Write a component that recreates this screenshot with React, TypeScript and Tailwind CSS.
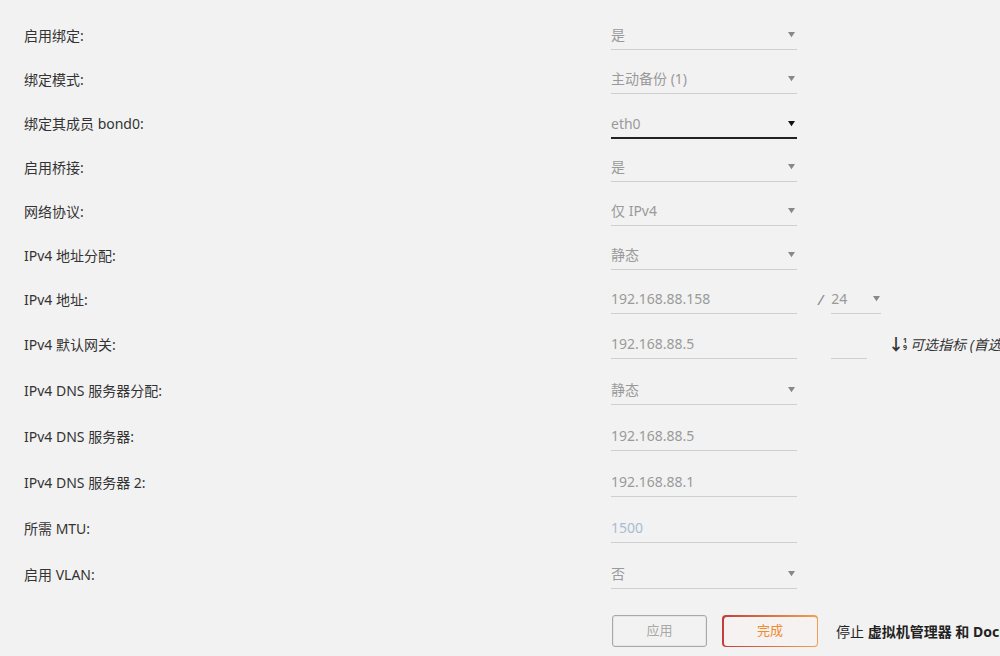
import React from "react";

type Row = {
  label: string;
  value: string;
  kind: "select" | "input";
  h: "a" | "b";
  active?: boolean;
  blue?: boolean;
  extra?: "prefix" | "metric";
};

const rows: Row[] = [
  { label: "启用绑定:", value: "是", kind: "select", h: "a" },
  { label: "绑定模式:", value: "主动备份 (1)", kind: "select", h: "a" },
  { label: "绑定其成员 bond0:", value: "eth0", kind: "select", h: "a", active: true },
  { label: "启用桥接:", value: "是", kind: "select", h: "a" },
  { label: "网络协议:", value: "仅 IPv4", kind: "select", h: "a" },
  { label: "IPv4 地址分配:", value: "静态", kind: "select", h: "a" },
  { label: "IPv4 地址:", value: "192.168.88.158", kind: "input", h: "a", extra: "prefix" },
  { label: "IPv4 默认网关:", value: "192.168.88.5", kind: "input", h: "b", extra: "metric" },
  { label: "IPv4 DNS 服务器分配:", value: "静态", kind: "select", h: "b" },
  { label: "IPv4 DNS 服务器:", value: "192.168.88.5", kind: "input", h: "b" },
  { label: "IPv4 DNS 服务器 2:", value: "192.168.88.1", kind: "input", h: "b" },
  { label: "所需 MTU:", value: "1500", kind: "input", h: "b", blue: true },
  { label: "启用 VLAN:", value: "否", kind: "select", h: "b" },
];

const font = { fontFamily: '"Noto Sans", "Noto Sans CJK SC", sans-serif' };

function Arrow({ dark }: { dark?: boolean }) {
  return (
    <svg width="7" height="7" viewBox="0 0 8 8" className="shrink-0">
      <path d="M0 1 L8 1 L4 7 Z" fill={dark ? "#111" : "#888"} />
    </svg>
  );
}

export default function App() {
  return (
    <div
      className="w-[1000px] h-[656px] bg-[#f2f2f2] overflow-hidden text-[14px] text-[#333] pt-[13px]"
      style={font}
    >
      {rows.map((r, i) => (
        <div
          key={i}
          className={`flex items-center pl-[24px] ${r.h === "a" ? "h-[44px]" : "h-[46px]"}`}
        >
          <div className="w-[587px] shrink-0 whitespace-nowrap">{r.label}</div>
          <div
            className={`w-[186px] h-[30px] shrink-0 flex items-center justify-between pr-[2px] ${
              r.active ? "border-b-2 border-[#222] mt-[2px]" : "border-b border-[#cfcfcf]"
            }`}
          >
            <span className={r.blue ? "text-[#a9bbd1]" : "text-[#9a9a9a]"}>{r.value}</span>
            {r.kind === "select" && <Arrow dark={r.active} />}
          </div>
          {r.extra === "prefix" && (
            <div className="flex items-center ml-[21px] shrink-0">
              <span className="text-[#888] text-[15px] mr-[8px] italic">/</span>
              <div className="w-[50px] h-[30px] flex items-center justify-between border-b border-[#cfcfcf] pr-[1px]">
                <span className="text-[#9a9a9a]">24</span>
                <Arrow />
              </div>
            </div>
          )}
          {r.extra === "metric" && (
            <div className="flex items-center ml-[34px] whitespace-nowrap shrink-0">
              <div className="w-[36px] h-[30px] border-b border-[#cfcfcf]" />
              <span className="ml-[21px] flex items-center text-[#333]">
                <span className="text-[16px] font-bold leading-none">↓</span>
                <span className="flex flex-col text-[7px] leading-[7px] font-bold -ml-[1px]">
                  <span>1</span>
                  <span>9</span>
                </span>
                <span className="ml-[3px] italic">可选指标 (首选</span>
              </span>
            </div>
          )}
        </div>
      ))}
      <div className="flex items-center pl-[612px] mt-[18px] whitespace-nowrap">
        <button className="w-[95px] h-[32px] shrink-0 rounded-[3px] border-[1.5px] border-[#a8a8a8] text-[#a8a8a8] text-[13px] bg-transparent shadow-[inset_0_0_0_1px_#e6e6e6]">
          应用
        </button>
        <div className="ml-[15px] w-[96px] h-[32px] shrink-0 rounded-[4px] p-[1.5px] bg-gradient-to-r from-[#c43c3c] to-[#f0a050]">
          <div className="w-full h-full rounded-[3px] bg-[#f5f2f1] flex items-center justify-center text-[13px] text-[#f08a30]">
            完成
          </div>
        </div>
        <span className="ml-[18px] shrink-0 text-[#222]">
          停止 <b>虚拟机管理器 和 Docker 服务</b>
        </span>
      </div>
    </div>
  );
}
